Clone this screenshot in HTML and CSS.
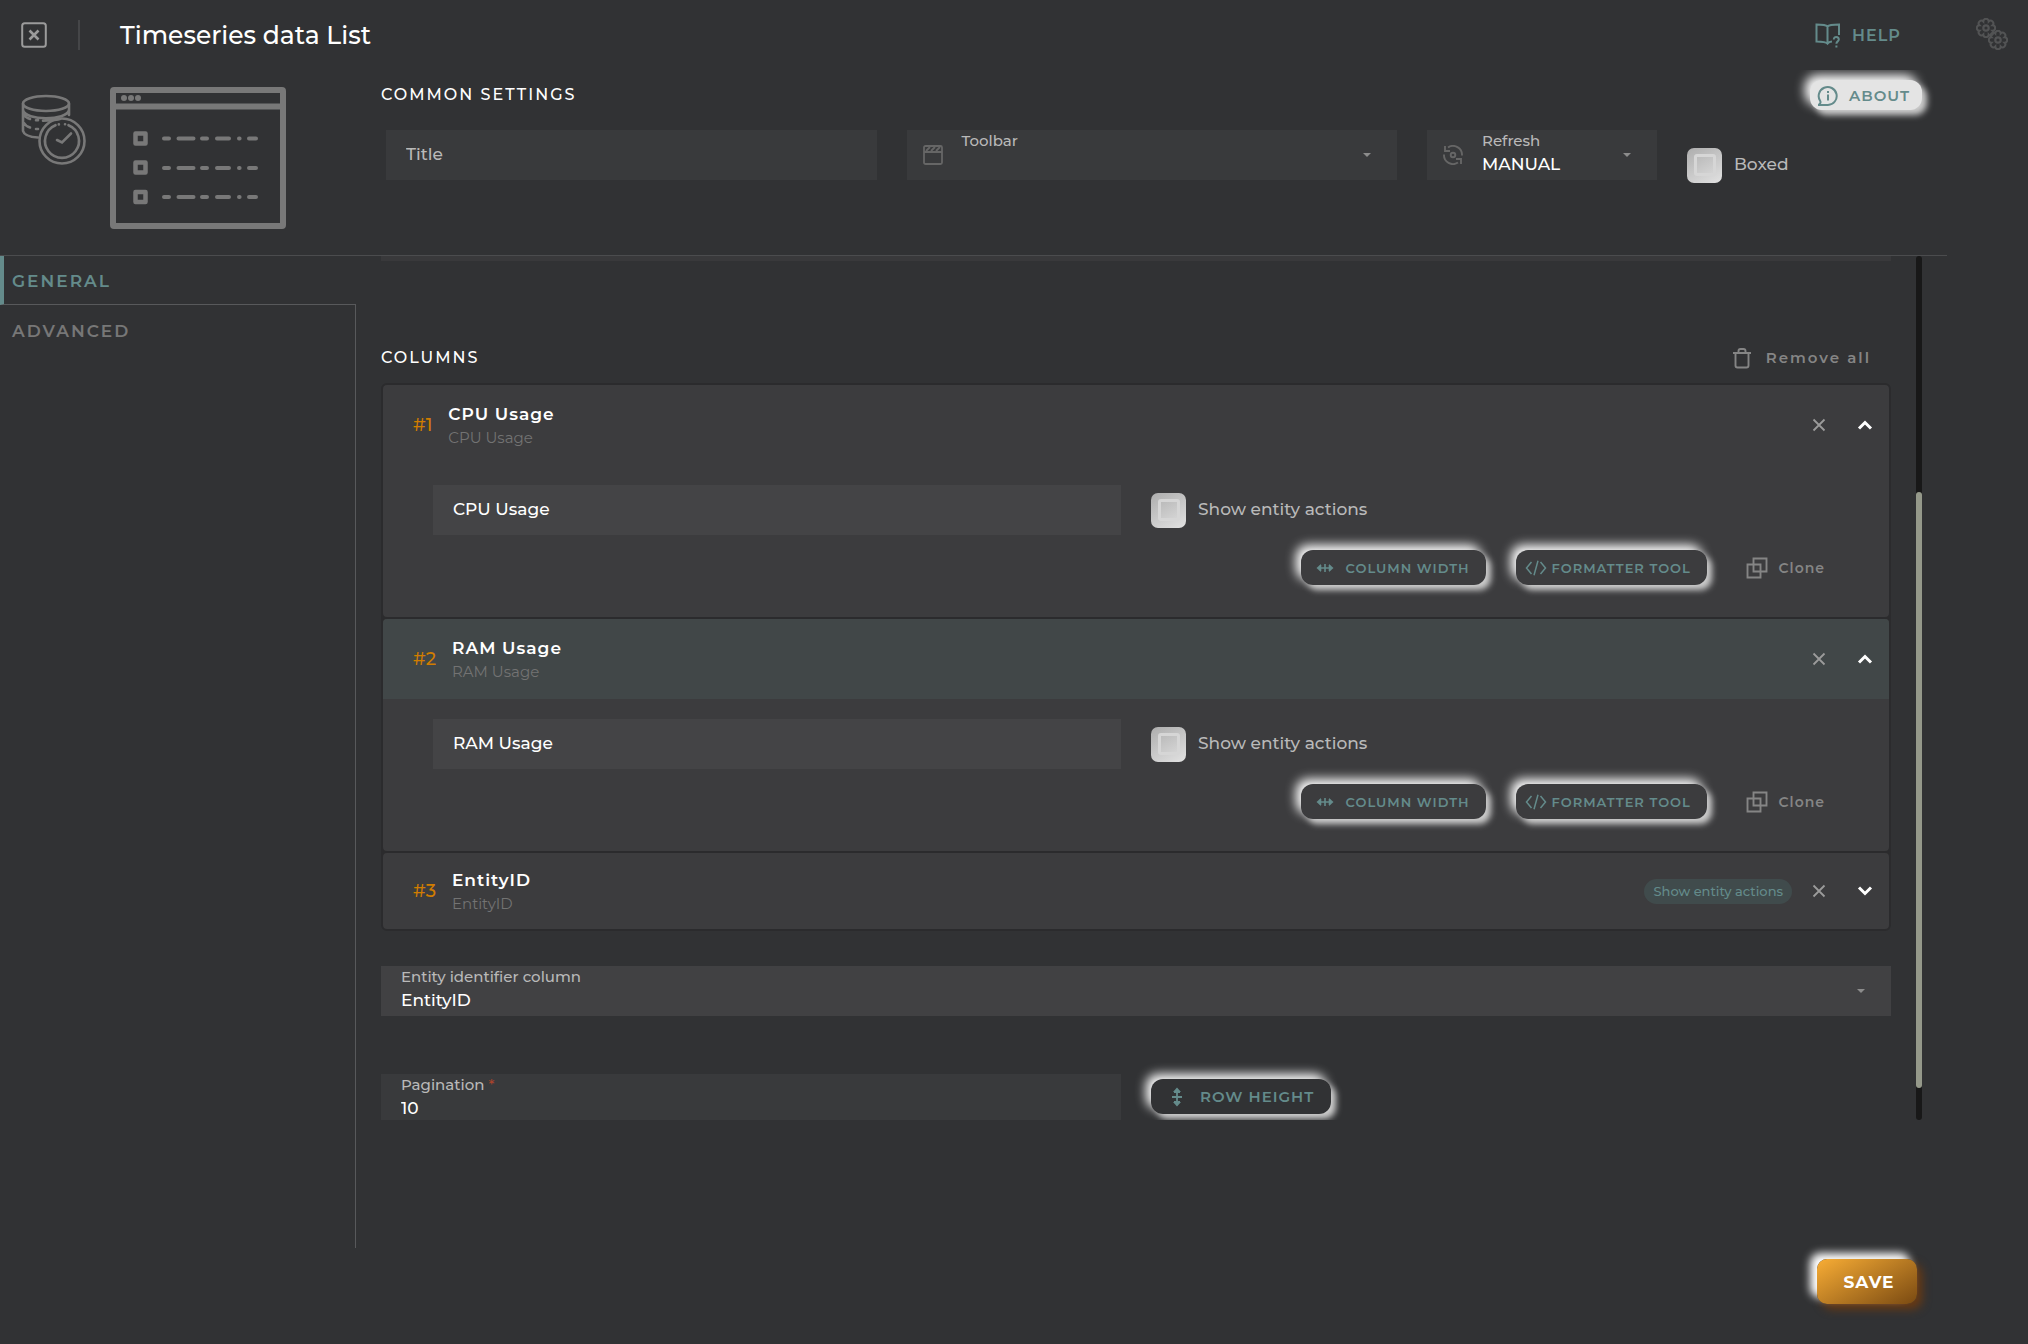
FILE: index.html
```html
<!DOCTYPE html>
<html lang="en">
<head>
<meta charset="utf-8">
<title>Timeseries data List</title>
<link rel="stylesheet" href="styles.css">
</head>
<body>
<svg class="defs" aria-hidden="true">
  <symbol id="i-width" viewBox="0 0 18 12"><path d="M2 6h14M9 2v8M4.500 3v6M13.500 3v6" fill="none" stroke="currentColor" stroke-width="1.600"/><path d="M.5 6 5 2v8zM17.500 6 13 2v8z" fill="currentColor"/></symbol>
  <symbol id="i-code" viewBox="0 0 22 16"><path d="M6.500 2 1.500 8l5 6M15.500 2l5 6-5 6M13 .8 9 15.200" fill="none" stroke="currentColor" stroke-width="1.500"/></symbol>
  <symbol id="i-clone" viewBox="0 0 22 22"><path d="M7.500 1.500h13v13h-13zM1.500 7.500h13v13h-13z" fill="none" stroke="currentColor" stroke-width="1.900"/></symbol>
  <symbol id="i-x" viewBox="0 0 14 14"><path d="M1.500 1.500l11 11M12.500 1.500l-11 11" fill="none" stroke="currentColor" stroke-width="1.800"/></symbol>
  <symbol id="i-up" viewBox="0 0 16 10"><path d="M2 8.500 8 2.500l6 6" fill="none" stroke="currentColor" stroke-width="3"/></symbol>
  <symbol id="i-down" viewBox="0 0 16 10"><path d="M2 1.500l6 6 6-6" fill="none" stroke="currentColor" stroke-width="3"/></symbol>
  <symbol id="i-caret" viewBox="0 0 8 4"><path d="M0 0h8L4 4z" fill="currentColor"/></symbol>
  <symbol id="i-gear" viewBox="-10 -10 20 20"><path d="M6.500-2.700A2.600 2.600 0 0 1 6.500 2.700 2.600 2.600 0 0 1 2.700 6.500 2.600 2.600 0 0 1-2.700 6.500 2.600 2.600 0 0 1-6.500 2.700 2.600 2.600 0 0 1-6.500-2.700 2.600 2.600 0 0 1-2.700-6.500 2.600 2.600 0 0 1 2.700-6.500 2.600 2.600 0 0 1 6.500-2.700Z" fill="none" stroke="currentColor" stroke-width="2"/><circle r="2.700" fill="none" stroke="currentColor" stroke-width="2.200"/></symbol>
</svg>

<header class="topbar">
  <button class="plain close" aria-label="Close">
    <svg width="26" height="26" viewBox="0 0 26 26" fill="none" stroke="currentColor"><rect x="1.200" y="1.200" width="23.600" height="23.600" rx="2.500" stroke-width="2"/><path d="M8.500 8.500l9 9M17.500 8.500l-9 9" stroke-width="2.600"/></svg>
  </button>
  <span class="divider"></span>
  <h1>Timeseries data List</h1>
  <a class="help" href="#help">
    <svg width="26" height="26" viewBox="0 0 26 26" fill="none" stroke="currentColor" stroke-width="2"><path d="M12.500 3.500c-1.500-1.700-4-2-11-2v17c7 0 9.500.3 11 2.200 1-1.400 2-1.900 4.500-2.100M12.500 3.500c1.500-1.700 4-2 11.500-2V12M12.500 3.500v17"/><path d="M18.800 16.500c0-3.500 5-3.200 5 0 0 2-2.400 1.800-2.400 4.200M21.400 22.500v2"/></svg>
    HELP
  </a>
  <button class="plain gears" aria-label="Settings">
    <svg width="34" height="34" viewBox="0 0 34 34"><use href="#i-gear" x="0" y="0" width="20" height="20"/><use href="#i-gear" x="12" y="12" width="20" height="20"/></svg>
  </button>
</header>

<section class="summary">
  <div class="art">
    <svg width="66" height="72" viewBox="0 0 66 72" fill="none" stroke="currentColor" stroke-width="2.600" stroke-linecap="round">
      <ellipse cx="25" cy="9.500" rx="23" ry="7.500"/>
      <path d="M2 10v27c1 4 7 6 15 6.500M48 10v11M2 16c2 11 44 11 46 0M3 21c1 2 3 3 6 4M15 26.200h2M22 26.700c6 0 11-.2 17-1.600M3 29c1 2 3 3.500 6 4.500M15 35h2"/>
      <circle cx="41" cy="47" r="22.500"/><path d="M47.500 31.200A17 17 0 1 1 34.500 31.200M37.800 30.400h.1M44 30.300h.1"/>
      <path d="M36 46l5 2.500 9-9"/>
    </svg>
    <svg width="178" height="144" viewBox="0 0 178 144" fill="none" stroke="currentColor" stroke-width="6">
      <rect x="4" y="4" width="170" height="136" rx="1"/><path d="M4 20.500h170"/>
      <g fill="currentColor" stroke="none"><circle cx="15" cy="12" r="3"/><circle cx="22" cy="12" r="3"/><circle cx="29" cy="12" r="3"/></g>
      <g stroke-width="4.500" stroke-linejoin="round"><rect x="26.500" y="47.500" width="10" height="10"/><rect x="26.500" y="76.500" width="10" height="10"/><rect x="26.500" y="106" width="10" height="10"/></g>
      <g stroke-width="4" stroke-linecap="round"><path id="dash" d="M55 52.500h5M69.500 52.500h15M93 52.500h5M108 52.500h12M130 52.500h.6M140 52.500h7"/><use href="#dash" y="29.500"/><use href="#dash" y="58.500"/></g>
    </svg>
  </div>
  <div class="common">
    <div class="common-head">
      <h2>COMMON SETTINGS</h2>
      <button class="glow about">
        <svg width="22" height="22" viewBox="0 0 22 22" fill="none" stroke="currentColor" stroke-width="2"><path d="M2 19.500c1.500-1 2-2 1.200-3.500A9 9 0 1 1 11 20H2z"/><path d="M11 9.500v6M11 6v2"/></svg>
        ABOUT
      </button>
    </div>
    <div class="common-fields">
      <div class="field"><input class="value" type="text" placeholder="Title" aria-label="Title"></div>
      <div class="field with-icon">
        <svg width="20" height="20" viewBox="0 0 20 20" fill="none" stroke="currentColor" stroke-width="1.800"><rect x="1" y="1" width="18" height="18" rx="1.500"/><path d="M1 7h18M3 6l4-4M8 6l4-4M13 6l4-4"/></svg>
        <div class="stack"><label for="toolbar">Toolbar</label><select class="value" id="toolbar"><option></option></select></div>
        <svg class="caret" width="8" height="4"><use href="#i-caret"/></svg>
      </div>
      <div class="field with-icon">
        <svg width="20" height="20" viewBox="0 0 20 20" fill="none" stroke="currentColor" stroke-width="1.900"><path d="M5 2.500A9 9 0 0 1 19 10.500M15 17.500A9 9 0 0 1 1 9.500M2 1v5h5M18 19v-5h-5"/><circle cx="10" cy="10" r="2.300"/></svg>
        <div class="stack"><label for="refresh">Refresh</label><select class="value" id="refresh"><option>MANUAL</option></select></div>
        <svg class="caret" width="8" height="4"><use href="#i-caret"/></svg>
      </div>
      <label class="check boxed"><input type="checkbox"><span>Boxed</span></label>
    </div>
  </div>
</section>

<main class="main">
  <nav class="tabs">
    <a class="tab active" href="#general">GENERAL</a>
    <a class="tab" href="#advanced">ADVANCED</a>
    <div class="rest"></div>
  </nav>
  <div class="viewport">
    <div class="content">
      <div class="sliver"></div>
      <div class="columns-head">
        <h2>COLUMNS</h2>
        <button class="plain remove">
          <svg width="20" height="22" viewBox="0 0 20 22" fill="none" stroke="currentColor" stroke-width="1.900"><path d="M1 6h18M3.500 6v12.500q0 2 2 2h9q2 0 2-2V6M6.500 6V4q0-2 2-2h3q2 0 2 2v2"/></svg>
          Remove all
        </button>
      </div>
      <div class="panels">
        <article class="panel">
          <header class="panel-head">
            <span class="num">#1</span>
            <div class="names"><h3>CPU Usage</h3><p>CPU Usage</p></div>
            <button class="plain x" aria-label="Remove"><svg width="14" height="14"><use href="#i-x"/></svg></button>
            <button class="plain chev" aria-label="Collapse"><svg width="16" height="10"><use href="#i-up"/></svg></button>
          </header>
          <div class="panel-body">
            <div class="field"><input class="value" type="text" value="CPU Usage" aria-label="Column title"></div>
            <label class="check"><input type="checkbox"><span>Show entity actions</span></label>
            <div class="actions">
              <button class="glow tool width"><svg width="18" height="12"><use href="#i-width"/></svg>COLUMN WIDTH</button>
              <button class="glow tool format"><svg width="22" height="16"><use href="#i-code"/></svg>FORMATTER TOOL</button>
              <button class="plain clone"><svg width="22" height="22"><use href="#i-clone"/></svg>Clone</button>
            </div>
          </div>
        </article>
        <article class="panel">
          <header class="panel-head active">
            <span class="num">#2</span>
            <div class="names"><h3>RAM Usage</h3><p>RAM Usage</p></div>
            <button class="plain x" aria-label="Remove"><svg width="14" height="14"><use href="#i-x"/></svg></button>
            <button class="plain chev" aria-label="Collapse"><svg width="16" height="10"><use href="#i-up"/></svg></button>
          </header>
          <div class="panel-body">
            <div class="field"><input class="value" type="text" value="RAM Usage" aria-label="Column title"></div>
            <label class="check"><input type="checkbox"><span>Show entity actions</span></label>
            <div class="actions">
              <button class="glow tool width"><svg width="18" height="12"><use href="#i-width"/></svg>COLUMN WIDTH</button>
              <button class="glow tool format"><svg width="22" height="16"><use href="#i-code"/></svg>FORMATTER TOOL</button>
              <button class="plain clone"><svg width="22" height="22"><use href="#i-clone"/></svg>Clone</button>
            </div>
          </div>
        </article>
        <article class="panel">
          <header class="panel-head collapsed">
            <span class="num">#3</span>
            <div class="names"><h3>EntityID</h3><p>EntityID</p></div>
            <span class="pill">Show entity actions</span>
            <button class="plain x" aria-label="Remove"><svg width="14" height="14"><use href="#i-x"/></svg></button>
            <button class="plain chev" aria-label="Expand"><svg width="16" height="10"><use href="#i-down"/></svg></button>
          </header>
        </article>
      </div>
      <div class="field entity">
        <div class="stack"><label for="entity">Entity identifier column</label><select class="value" id="entity"><option>EntityID</option></select></div>
        <svg class="caret" width="8" height="4"><use href="#i-caret"/></svg>
      </div>
      <div class="paging">
        <div class="field"><div class="stack"><label for="pagination">Pagination <span class="req">*</span></label><input class="value" id="pagination" type="text" value="10"></div></div>
        <button class="glow row-height">
          <svg width="12" height="20" viewBox="0 0 12 20" fill="none" stroke="currentColor" stroke-width="1.800"><path d="M6 2v16M1 10h10M3 5h6M3 15h6"/><path d="M6 .5 10 5H2zM6 19.500 10 15H2z" fill="currentColor" stroke="none"/></svg>
          ROW HEIGHT
        </button>
      </div>
    </div>
    <div class="track"><span class="before"></span><span class="thumb"></span><span class="after"></span></div>
  </div>
</main>

<footer class="foot"><button class="save">SAVE</button></footer>
</body>
</html>
```
FILE: styles.css
```css
:root {
  --bg: #313234;
  --panel: #3c3c3e;
  --line: #58595b;
  --teal: #648b8b;
  --muted: #858585;
  --soft: #b9b9b9;
}
* { box-sizing: border-box; }
body {
  margin: 0;
  min-height: 100vh;
  display: flex;
  flex-direction: column;
  background: var(--bg);
  color: #fff;
  font: 500 17px/20px Montserrat, Inter, sans-serif;
}
.defs { position: absolute; width: 0; height: 0; }
h1, h2, h3, p { margin: 0; }
svg { flex: none; display: block; }
button, input, select { font: inherit; color: inherit; margin: 0; }
.plain { background: none; border: 0; padding: 0; display: flex; align-items: center; }

.topbar { height: 70px; display: flex; align-items: center; padding: 0 18px 0 21px; }
.close { color: #9b9b9b; }
.divider { width: 2px; height: 30px; background: #454648; margin: 0 40px 0 31px; }
h1 { font-size: 25px; line-height: 32px; font-weight: 500; }
.help {
  margin-left: auto; padding-top: 2px; display: flex; align-items: center; gap: 11px;
  color: var(--teal); text-decoration: none; font-size: 16px; font-weight: 600; letter-spacing: 1px;
}
.gears { color: #525354; margin-left: 75px; }

.summary { display: flex; height: 186px; overflow: clip; border-bottom: 1px solid #4b4c4e; margin-right: 81px; }
.art { width: 381px; padding: 16px 0 0 21px; display: flex; gap: 22px; color: #787878; }
.art svg:first-child { margin-top: 8px; }
.common { flex: 1; padding-right: 25px; }
.common-head { height: 60px; padding-top: 10px; display: flex; align-items: flex-start; justify-content: space-between; }
h2 { font-size: 16px; line-height: 30px; font-weight: 500; letter-spacing: 2px; }
.common-fields { display: grid; grid-template-columns: 1fr 1fr 230px 230px; gap: 30px; padding: 0 5px; }

.field { height: 50px; background: #393a3c; display: flex; align-items: center; padding: 0 30px 0 20px; }
.field > .value { margin-bottom: 2px; }
.with-icon { padding: 0 26px 0 16px; gap: 19px; }
.field > svg { color: #666; }
.field .caret { color: #8c8c8c; }
.value { width: 100%; background: none; border: 0; padding: 0; height: 24px; outline: 0; appearance: none; }
.value::placeholder { color: var(--soft); opacity: 1; }
.stack { flex: 1; min-width: 0; align-self: flex-start; }
.stack label { display: block; font-size: 15px; line-height: 22px; color: var(--soft); }
.req { color: #a8432c; }

.check { display: flex; align-items: center; gap: 12px; height: 50px; color: var(--soft); }
.check span { padding-bottom: 2px; }
.check input {
  appearance: none; width: 35px; height: 35px; border-radius: 7px; display: grid; place-items: center;
  background: linear-gradient(150deg, #adadad, #e2e2e2);
}
.check input::after { content: ""; box-sizing: border-box; width: 22px; height: 22px; margin-bottom: 1px; border: 3px solid #d6d6d6; border-radius: 3px; }
.boxed { margin-top: 10px; }

.glow {
  border: 0; border-radius: 12px; height: 35px; background: transparent; color: var(--teal);
  display: flex; align-items: center; font-weight: 600; letter-spacing: 1px; white-space: nowrap;
  box-shadow: 5px 5px 6px #ccc, -5px -5px 11px #fff;
}
.about { width: 112px; height: 30px; background: #e4e4e4; padding: 2px 7px 0; gap: 10px; font-size: 15px; }

.main { flex: 1; display: flex; }
.tabs { width: 356px; display: flex; flex-direction: column; }
.tab {
  height: 52px; line-height: 52px; padding-left: 12px; color: #777; text-decoration: none;
  font-size: 17px; font-weight: 600; letter-spacing: 2px; border-right: 1px solid var(--line);
}
.tab.active {
  height: 49px; line-height: 50px; border-right: 0; border-left: 4px solid var(--teal); padding-left: 8px;
  color: var(--teal); border-bottom: 1px solid var(--line);
}
.rest { flex: 1; border-right: 1px solid var(--line); }

.viewport { flex: 1; display: flex; overflow: clip; margin-bottom: 128px; padding: 0 106px 0 25px; gap: 25px; }
.content { flex: 1; height: 864px; }
.sliver { height: 5px; background: #39393b; }
.columns-head { display: flex; align-items: center; justify-content: space-between; height: 50px; margin-top: 72px; padding-right: 20px; }
.remove { gap: 14px; font-size: 15px; font-weight: 600; letter-spacing: 2px; color: var(--muted); }
.panels { display: flex; flex-direction: column; gap: 2px; background: #2b2b2d; border: 2px solid #2b2b2d; border-radius: 6px; }
.panel { background: var(--panel); border-radius: 4px; overflow: clip; }
.panel-head { height: 80px; display: flex; align-items: center; padding: 0 16px 0 30px; }
.panel-head.active { background: #414748; }
.panel-head.collapsed { height: 76px; }
.num { color: #d17d00; font-size: 18px; margin-right: 16px; }
.names { flex: 1; padding-top: 2px; }
h3 { font-size: 17px; line-height: 24px; font-weight: 600; letter-spacing: 1px; }
.names p { font-size: 15px; line-height: 24px; font-weight: 400; color: #737373; }
.x { color: #9b9b9b; margin-right: 31px; }
.pill { height: 25px; line-height: 24px; border-radius: 13px; padding: 0 9px; margin-right: 20px; background: #404b4c; color: var(--teal); font-size: 13px; font-weight: 500; }
.panel-body { display: grid; grid-template-columns: 1fr 1fr; column-gap: 30px; row-gap: 15px; padding: 20px 50px 32px; }
.panel-body .field { background: #444446; }
.actions { grid-column: 1 / -1; display: flex; justify-content: flex-end; align-items: center; gap: 30px; padding-right: 14px; }
.tool { font-size: 13px; }
.width { width: 185px; padding: 0 15px; gap: 12px; }
.format { width: 191px; padding: 0 9px; gap: 5px; }
.clone { gap: 11px; margin-left: 9px; font-size: 14px; font-weight: 600; letter-spacing: 1px; color: var(--muted); }
.entity { background: #414143; margin: 35px 0 58px; padding-right: 26px; }
.paging { display: grid; grid-template-columns: 1fr 1fr; gap: 30px; align-items: center; }
.row-height { width: 180px; padding: 0 20px; gap: 17px; font-size: 15px; margin-bottom: 5px; }

.track { width: 6px; border-radius: 3px; background: #181818; display: flex; flex-direction: column; overflow: hidden; }
.before { flex: 236; }
.thumb { flex: 596; border-radius: 3px; background: #95998a; }
.after { flex: 32; }

.foot { height: 96px; display: flex; justify-content: flex-end; padding: 11px 111px 0 0; }
.save {
  width: 100px; height: 45px; border: 0; border-radius: 10px; padding: 0 0 0 4px; font-weight: 700; letter-spacing: 1px;
  background: linear-gradient(150deg, #f8ad35, #7a4a12);
  box-shadow: -7px -6px 9px #fff, 5px 5px 10px #6b3a12;
}
```
